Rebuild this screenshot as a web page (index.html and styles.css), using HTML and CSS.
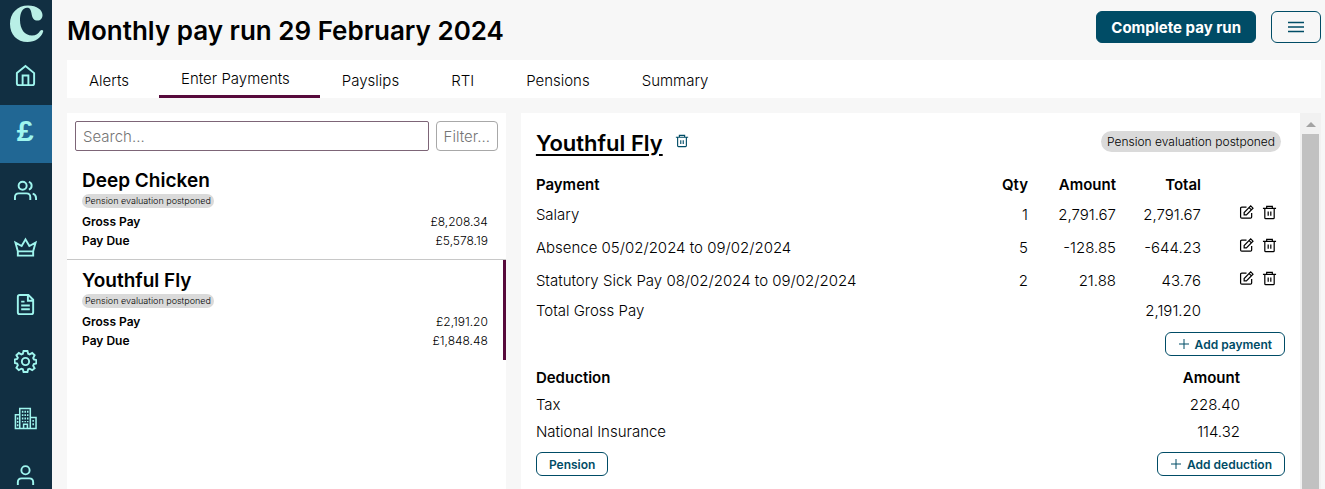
FILE: index.html
```html
<!DOCTYPE html>
<html lang="en">
<head>
    <meta charset="UTF-8">
    <meta name="viewport" content="width=device-width, initial-scale=1.0">
    <title>Monthly pay run</title>
    <link rel="stylesheet" href="styles.css">
</head>
<body>
    <!-- shared icons -->
    <svg class="sprite" aria-hidden="true">
        <symbol id="trash" viewBox="0 0 16 16">
            <path d="M1 3.7h14M5 3.5V1.5h6v2M3 4v9.5q0 1 1 1h8q1 0 1-1V4M6.6 7v4.5M9.4 7v4.5"/>
        </symbol>
        <symbol id="edit" viewBox="0 0 16 16">
            <path d="M8 2.2H3q-1.3 0-1.3 1.3v9.3q0 1.3 1.3 1.3h9.2q1.3 0 1.3-1.3V8.5M5.5 10.5V8l7-7 2.4 2.4-7 7.1zM10.8 2.8l2.4 2.4"/>
        </symbol>
        <symbol id="plus" viewBox="0 0 12 12">
            <path d="M6 1v10M1 6h10"/>
        </symbol>
    </svg>

    <nav class="sidebar">
        <a href="#" class="logo" aria-label="Home page">
            <svg width="36" height="38" viewBox="0 0 36 38">
                <path fill="#b9efe6" d="M34 27C32 33 26 37 18.500 37 8 37 1 29.500 1 19 1 8 8.500.5 19 .5c9 0 14.500 4.500 14.500 9.500 0 3.500-2 5.500-5 5.500-3.500 0-5-2-5.700-5.500C22 5.500 21.500 2.800 18 2.800 13.500 2.800 11 8 11 15c0 9 4.500 15.500 12 15.500 4 0 6.500-2 8-4.500 1.500-2 4-1 3 1z"/>
            </svg>
        </a>
        <a href="#" class="nav-item" aria-label="Home">
            <svg viewBox="0 0 24 24"><path d="M3 9.500 12 2l9 7.500V20q0 2-2 2H5q-2 0-2-2zM9 22V12h6v10"/></svg>
        </a>
        <a href="#" class="nav-item active" aria-label="Pay"><span class="pound">£</span></a>
        <a href="#" class="nav-item" aria-label="People">
            <svg viewBox="0 0 24 24"><circle cx="9" cy="7" r="4.200"/><path d="M1 22v-3q0-4 4-4h8q4 0 4 4v3M15.500 3a4.200 4.200 0 0 1 0 8M19.500 15.300q3.500 1 3.500 4.700v2"/></svg>
        </a>
        <a href="#" class="nav-item" aria-label="Crown">
            <svg viewBox="0 0 24 24"><path d="M4 16 1.500 7 8 10.500 12 3.500l4 7 6.500-3.500L20 16zM4 16v4.500h16V16z"/></svg>
        </a>
        <a href="#" class="nav-item" aria-label="Documents">
            <svg viewBox="0 0 24 24"><path d="M15 2H6Q4 2 4 4v16q0 2 2 2h12q2 0 2-2V7zM14.500 2.500V8H20M7.500 9H11M7.500 13h9M7.500 17h9"/></svg>
        </a>
        <a href="#" class="nav-item" aria-label="Settings">
            <svg viewBox="0 0 24 24"><circle cx="12" cy="12" r="3.800"/><path d="M10 1h4l.8 3 1.500.6L19 3l2.500 2.500-1.500 2.800.7 1.600 2.600.6v3.500l-2.600.7-.7 1.600 1.500 2.700L19 21l-2.700-1.500-1.500.6-.8 2.900h-4l-.8-2.900-1.500-.6L5 21l-2.500-2.500L4 15.800l-.7-1.600-2.600-.7V10l2.600-.6L4 8.200 2.500 5.500 5 3l2.700 1.600L9.200 4z"/></svg>
        </a>
        <a href="#" class="nav-item" aria-label="Company">
            <svg viewBox="0 0 24 24" class="fine"><path d="M6 22.500V1.500h11v21M6 8H1.500v14.500H23V11h-6M10 22.500V18h4v4.500"/><path d="M9 4v12M11.700 4v12M14.300 4v12M3.800 11v9M20 13.500V20" stroke-dasharray="2 1.500"/></svg>
        </a>
        <a href="#" class="nav-item" aria-label="Account">
            <svg viewBox="0 0 24 24"><circle cx="12" cy="6.500" r="4.300"/><path d="M4 22v-3q0-4 4-4h8q4 0 4 4v3"/></svg>
        </a>
    </nav>

    <main class="main">
        <header class="header">
            <h1>Monthly pay run 29 February 2024</h1>
            <button class="complete-btn">Complete pay run</button>
            <button class="menu-btn" aria-label="Menu">
                <svg width="16" height="12" viewBox="0 0 16 12"><path d="M0 1.500h16M0 6h16M0 10.500h16"/></svg>
            </button>
        </header>

        <nav class="tabs">
            <a href="#">Alerts</a>
            <a href="#" class="active">Enter Payments</a>
            <a href="#">Payslips</a>
            <a href="#">RTI</a>
            <a href="#">Pensions</a>
            <a href="#">Summary</a>
        </nav>

        <div class="panels">
            <section class="list">
                <div class="search-row">
                    <input type="text" class="search" placeholder="Search..." aria-label="Search">
                    <button class="filter">Filter...</button>
                </div>
                <article class="employee">
                    <h2>Deep Chicken</h2>
                    <span class="pill small">Pension evaluation postponed</span>
                    <dl>
                        <dt>Gross Pay</dt><dd>£8,208.34</dd>
                        <dt>Pay Due</dt><dd>£5,578.19</dd>
                    </dl>
                </article>
                <article class="employee selected">
                    <h2>Youthful Fly</h2>
                    <span class="pill small">Pension evaluation postponed</span>
                    <dl>
                        <dt>Gross Pay</dt><dd>£2,191.20</dd>
                        <dt>Pay Due</dt><dd>£1,848.48</dd>
                    </dl>
                </article>
            </section>

            <section class="detail">
                <div class="detail-body">
                    <div class="detail-head">
                        <a href="#" class="name">Youthful Fly</a>
                        <button class="icon-btn teal" aria-label="Remove employee"><svg><use href="#trash"/></svg></button>
                        <span class="pill">Pension evaluation postponed</span>
                    </div>

                    <table class="payments">
                        <thead>
                            <tr><th>Payment</th><th class="num qty">Qty</th><th class="num amount">Amount</th><th class="num total">Total</th><th class="actions"></th></tr>
                        </thead>
                        <tbody>
                            <tr class="line">
                                <td>Salary</td><td class="num">1</td><td class="num">2,791.67</td><td class="num">2,791.67</td>
                                <td class="actions"><button class="icon-btn" aria-label="Edit"><svg><use href="#edit"/></svg></button><button class="icon-btn" aria-label="Delete"><svg><use href="#trash"/></svg></button></td>
                            </tr>
                            <tr class="line">
                                <td>Absence 05/02/2024 to 09/02/2024</td><td class="num">5</td><td class="num">-128.85</td><td class="num">-644.23</td>
                                <td class="actions"><button class="icon-btn" aria-label="Edit"><svg><use href="#edit"/></svg></button><button class="icon-btn" aria-label="Delete"><svg><use href="#trash"/></svg></button></td>
                            </tr>
                            <tr class="line">
                                <td>Statutory Sick Pay 08/02/2024 to 09/02/2024</td><td class="num">2</td><td class="num">21.88</td><td class="num">43.76</td>
                                <td class="actions"><button class="icon-btn" aria-label="Edit"><svg><use href="#edit"/></svg></button><button class="icon-btn" aria-label="Delete"><svg><use href="#trash"/></svg></button></td>
                            </tr>
                            <tr><td>Total Gross Pay</td><td></td><td></td><td class="num">2,191.20</td><td></td></tr>
                        </tbody>
                    </table>
                    <div class="btn-row">
                        <button class="outline-btn push"><svg><use href="#plus"/></svg>Add payment</button>
                    </div>

                    <table class="deductions">
                        <thead>
                            <tr><th>Deduction</th><th class="num">Amount</th></tr>
                        </thead>
                        <tbody>
                            <tr><td>Tax</td><td class="num">228.40</td></tr>
                            <tr><td>National Insurance</td><td class="num">114.32</td></tr>
                        </tbody>
                    </table>
                    <div class="btn-row">
                        <button class="outline-btn">Pension</button>
                        <button class="outline-btn push"><svg><use href="#plus"/></svg>Add deduction</button>
                    </div>
                </div>
                <div class="scrollbar" aria-hidden="true">
                    <span class="arrow"></span>
                    <span class="thumb"></span>
                </div>
            </section>
        </div>
    </main>
</body>
</html>
```
FILE: styles.css
```css
* {
    box-sizing: border-box;
}

body {
    margin: 0;
    display: flex;
    height: 100vh;
    overflow: hidden;
    background-color: #f7f7f7;
    color: #000;
    font-family: Inter, sans-serif;
    font-size: 15px;
    font-weight: 300;
}

button, input {
    font-family: inherit;
    cursor: pointer;
}

svg {
    display: block;
    fill: none;
    stroke: currentColor;
}

.sprite {
    display: none;
}

/* sidebar */
.sidebar {
    flex: none;
    width: 52px;
    background-color: #112f42;
}

.logo {
    display: block;
    height: 48px;
    padding: 5px 0 0 9px;
}

.logo svg {
    stroke: none;
}

.nav-item {
    display: flex;
    justify-content: center;
    align-items: center;
    height: 57px;
    padding: 0 2px 2px 0;
    color: #9ff5ee;
    text-decoration: none;
}

.nav-item.active {
    height: 58px;
    background-color: #216794;
}

.nav-item svg {
    width: 23px;
    height: 23px;
    stroke-width: 2;
}

.nav-item svg.fine {
    stroke-width: 1.6;
}

.pound {
    font-family: "Liberation Mono", monospace;
    font-size: 30px;
    font-weight: bold;
    line-height: 30px;
}

/* main area */
.main {
    flex: 1;
    min-width: 0;
    display: flex;
    flex-direction: column;
    padding: 0 4px 0 15px;
}

.header {
    display: flex;
    align-items: center;
    gap: 15px;
    height: 60px;
    padding-bottom: 6px;
}

h1 {
    flex: 1;
    margin: 0;
    padding-top: 6px;
    font-size: 26px;
    font-weight: 600;
}

.complete-btn, .menu-btn {
    height: 32px;
    border: 1px solid #004c66;
    border-radius: 6px;
}

.complete-btn {
    padding: 0 14px;
    background-color: #004c66;
    color: white;
    font-size: 15px;
    font-weight: 700;
}

.menu-btn {
    display: flex;
    justify-content: center;
    align-items: center;
    width: 50px;
    background-color: transparent;
    color: #004c66;
}

.menu-btn svg {
    stroke-width: 1.5;
}

.tabs {
    display: flex;
    height: 38px;
    margin-bottom: 15px;
    background-color: white;
}

.tabs a {
    padding: 0 30px 0 22px;
    color: #000;
    line-height: 41px;
    text-decoration: none;
}

.tabs a.active {
    border-bottom: 3px solid #570a3c;
    line-height: 37px;
}

.panels {
    flex: 1;
    min-height: 0;
    display: flex;
    gap: 15px;
}

/* employee list */
.list {
    width: 35%;
    background-color: white;
}

.search-row {
    display: flex;
    gap: 7px;
    padding: 8px 8px 9px;
}

.search, .filter {
    height: 30px;
    padding: 0 7px;
    background-color: white;
    color: #757575;
    font-size: 15px;
    font-weight: 300;
}

.search {
    flex: 1;
    min-width: 0;
    border: 1px solid #7d6577;
    border-radius: 2px;
}

.search::placeholder {
    color: #757575;
}

.filter {
    border: 1px solid #a8a8a8;
    border-radius: 4px;
}

.employee {
    padding: 8px 15px 10px;
    border-right: 3px solid transparent;
}

.employee.selected {
    border-right-color: #570a3c;
    box-shadow: 0 -1px #c8c8c8;
}

h2 {
    margin: 0;
    font-size: 19px;
    font-weight: 600;
    line-height: 26px;
}

.pill {
    display: inline-block;
    padding: 0 6px;
    border-radius: 11px;
    background-color: #dadada;
    font-size: 12px;
    font-weight: 300;
    line-height: 21px;
}

.pill.small {
    display: block;
    width: max-content;
    padding: 0 3px;
    border-radius: 7px;
    font-size: 9px;
    line-height: 14px;
}

dl {
    display: grid;
    grid-template-columns: 1fr auto;
    margin: 4px 0 0;
    font-size: 12px;
    line-height: 19px;
}

dt {
    font-weight: 600;
}

dd {
    margin: 0;
    text-align: right;
    font-weight: 300;
}

/* payslip detail */
.detail {
    flex: 1;
    min-width: 0;
    display: flex;
    background-color: white;
}

.detail-body {
    flex: 1;
    min-width: 0;
    overflow: hidden;
    padding: 15px 15px 0;
}

.detail-head {
    display: flex;
    align-items: center;
    height: 26px;
    margin: 0 4px 17px 0;
}

.name {
    padding-top: 3px;
    color: #000;
    font-size: 22px;
    font-weight: 600;
    text-underline-offset: 3px;
}

.detail-head .pill {
    margin-left: auto;
}

.detail-head .icon-btn {
    margin-left: 12px;
}

.icon-btn {
    padding: 0;
    border: none;
    background: none;
    color: #000;
}

.icon-btn svg {
    width: 15px;
    height: 15px;
    stroke-width: 1.3;
}

.icon-btn.teal {
    color: #004c66;
}

.icon-btn.teal svg {
    width: 14px;
    height: 14px;
}

table {
    width: 100%;
    border-collapse: collapse;
}

th, td {
    height: 27px;
    padding: 0;
    text-align: left;
    white-space: nowrap;
}

th {
    font-weight: 600;
}

.line td {
    height: 33px;
}

.num {
    text-align: right;
}

.qty {
    width: 80px;
}

.amount {
    width: 88px;
}

.total {
    width: 85px;
}

.actions {
    width: 84px;
    padding-left: 38px;
}

.actions .icon-btn + .icon-btn {
    margin-left: 8px;
}

.deductions {
    margin-bottom: 7px;
}

.deductions .num {
    padding-right: 45px;
}

.btn-row {
    display: flex;
}

.payments + .btn-row {
    margin: 8px 0;
}

.outline-btn {
    display: flex;
    align-items: center;
    gap: 5px;
    height: 24px;
    padding: 0 12px;
    border: 1px solid #004c66;
    border-radius: 6px;
    background-color: white;
    color: #004c66;
    font-size: 12px;
    font-weight: 600;
}

.outline-btn svg {
    width: 12px;
    height: 12px;
}

.outline-btn.push {
    margin-left: auto;
}

.scrollbar {
    display: flex;
    flex-direction: column;
    align-items: center;
    width: 21px;
    background-color: #f1f1f1;
}

.arrow {
    margin: 9px 0 7px;
    border: 5px solid transparent;
    border-top: none;
    border-bottom-color: #a3a3a3;
}

.thumb {
    flex: 1;
    width: 17px;
    background-color: #c1c1c1;
}
```
